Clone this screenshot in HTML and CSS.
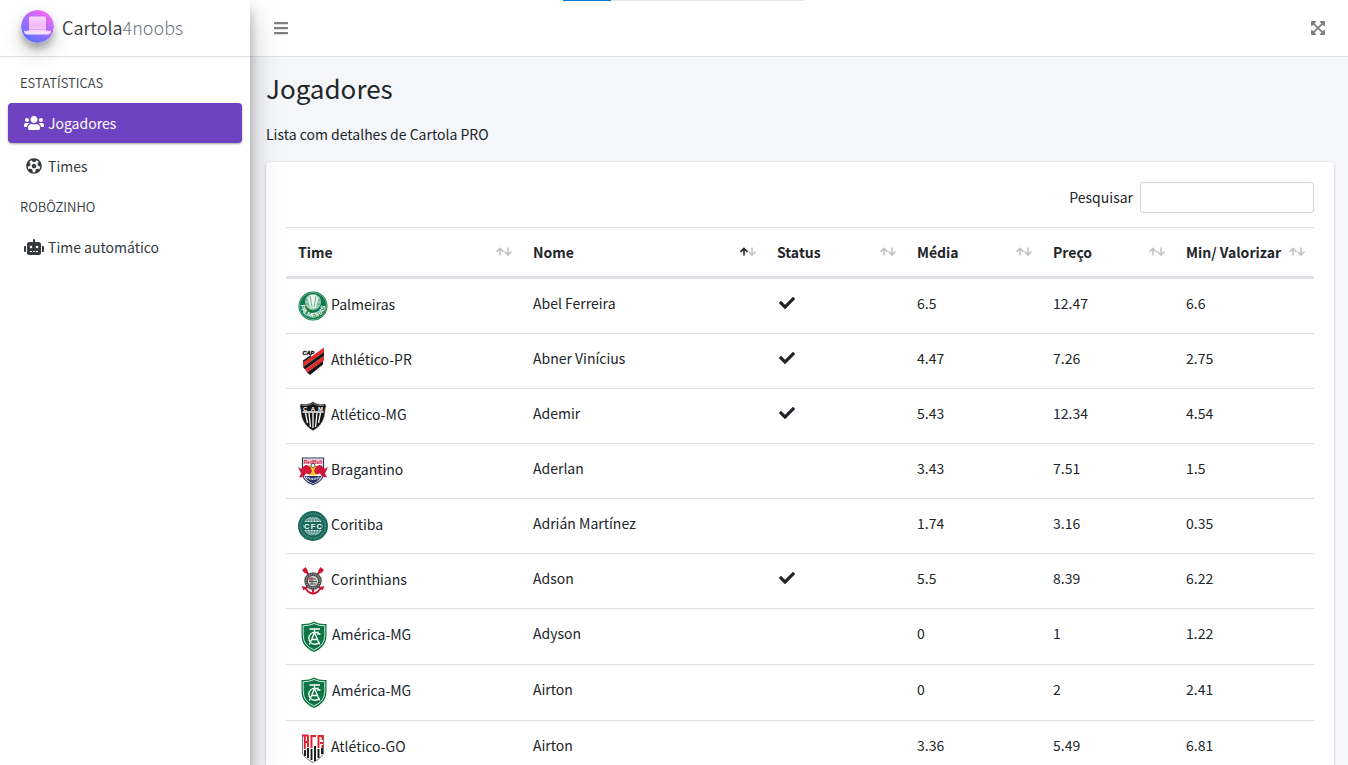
FILE: index.html
```html
<!DOCTYPE html>
<html lang="pt-BR">
<head>
<meta charset="utf-8">
<meta name="viewport" content="width=device-width, initial-scale=1">
<title>Cartola4noobs</title>
<link rel="stylesheet" href="styles.css">
</head>
<body>
<svg class="sprite" aria-hidden="true">
  <defs>
    <linearGradient id="hat-bg" x1="0.2" y1="1" x2="0.8" y2="0"><stop offset="0" stop-color="#5173ff"/><stop offset="0.5" stop-color="#a66bff"/><stop offset="1" stop-color="#ff68f4"/></linearGradient>
    <linearGradient id="hat-fg" x1="0" y1="0" x2="0" y2="1"><stop offset="0" stop-color="#fbd9ff"/><stop offset="0.5" stop-color="#f2b6fb"/><stop offset="1" stop-color="#fbe9ff"/></linearGradient>
    <symbol id="check" viewBox="0 0 512 512"><path d="M173.898 439.404l-166.4-166.4c-9.997-9.997-9.997-26.206 0-36.204l36.203-36.204c9.997-9.998 26.207-9.998 36.204 0L192 312.69 432.095 72.596c9.997-9.997 26.207-9.997 36.204 0l36.203 36.204c9.997 9.997 9.997 26.206 0 36.204l-294.4 294.401c-9.998 9.997-26.207 9.997-36.204-.001z"/></symbol>
    <symbol id="sort" viewBox="0 0 16 10"><g fill="none" stroke="currentColor" stroke-width="1.6"><path class="sort-up" d="M4 8.500V1.500M0.500 5L4 1.500L7.500 5"/><path class="sort-down" d="M12 0.500V8M8.500 4.500L12 8L15.500 4.500"/></g></symbol>
    <symbol id="palmeiras" viewBox="0 0 30 30"><circle cx="15" cy="15" r="14.500" fill="#0d7a47"/><circle cx="15" cy="15" r="13.600" fill="none" stroke="#b9dccb" stroke-width="0.500"/><circle cx="15" cy="11" r="8" fill="#9ccbb4"/><path d="M9.500 7l3 10h5l3-10-3-3h-5z" fill="#e9f4ee"/><path d="M12 5l2 11M18 5l-2 11M8 9h2M20 9h2M8 13h3M19 13h3" stroke="#4c9d76" stroke-width="0.800"/><path id="pal-arc" d="M2.500 14a12.500 12.500 0 0 0 25 0" fill="none"/><text font-size="6.500" font-weight="700" fill="#fff"><textPath href="#pal-arc" startOffset="0">PALMEIRAS</textPath></text></symbol>
    <symbol id="athletico" viewBox="0 0 30 30"><path d="M5 16.500L26 1.500V6L5 21z" fill="#e32b2e"/><path d="M5 21L26 6v4L7 23.500z" fill="#171717"/><path d="M7 23.500L26 10v4.500L9 26.500z" fill="#e32b2e"/><path d="M9 26.500L25 15v3.500L12 29z" fill="#171717"/><path d="M5 14.500L13 9v2l-8 5.500z" fill="#171717"/><text x="4.500" y="8.500" font-size="5.500" font-weight="900" font-style="italic" fill="#111" stroke="#111" stroke-width="0.400">CAP</text></symbol>
    <symbol id="atletico-mg" viewBox="0 0 30 30"><path d="M15 .8c4 3 8 3 12 2.200l1 2-1 4c0 9-4 16-12 20.500C7 25 3 18 3 9L2 5l1-2c4 .8 8 .8 12-2.200z" fill="#151515" stroke="#888" stroke-width="0.500"/><path d="M4.500 11h21M7.500 12l2 10M11 12l1.500 14M19 12l-1.500 14M22.500 12l-2 10M15 12v15" stroke="#fff" stroke-width="1.300"/><path d="M4 4.500q6 1 11-2q5 3 11 2" fill="none" stroke="#aaa" stroke-width="0.600"/><text x="5" y="10" font-size="6" font-weight="700" fill="#fff">C</text><text x="12.800" y="9.500" font-size="6" font-weight="700" fill="#fff">A</text><text x="20" y="10" font-size="6" font-weight="700" fill="#fff">M</text></symbol>
    <symbol id="bragantino" viewBox="0 0 30 30"><path d="M4.500 2h21v15q0 8-10.500 11.500Q4.500 25 4.500 17z" fill="#fff" stroke="#23325f" stroke-width="1.200"/><path d="M6 3h18v4.500H6z" fill="#f3ccd5"/><text x="5.500" y="7.500" font-size="5" font-weight="700" fill="#d01b45">RedBull</text><circle cx="15" cy="14" r="5.500" fill="#ffc928"/><path d="M0 11l4 2c2-5 6-5 8.500-1.500L14 15l-2 3.500-4-1-2 3-5 1 2-4zM30 11l-4 2c-2-5-6-5-8.500-1.500L16 15l2 3.500 4-1 2 3 5 1-2-4z" fill="#d0173c"/><circle cx="15" cy="9.500" r="2" fill="#fff" stroke="#23325f" stroke-width="0.800"/><path d="M6.500 20h17q-2 5-8.500 7.500Q8.500 25 6.500 20z" fill="#23325f"/><path d="M8 21q7 4 14 0" fill="none" stroke="#d8dce8" stroke-width="2" stroke-dasharray="1 0.600"/></symbol>
    <symbol id="coritiba" viewBox="0 0 30 30"><circle cx="15" cy="15" r="15" fill="#156559"/><circle cx="15" cy="15" r="12.300" fill="none" stroke="#4a8b81" stroke-width="2" stroke-dasharray="1 0.800"/><circle cx="15" cy="15" r="9.500" fill="#d8e7e4"/><g fill="none" stroke="#25756a" stroke-width="0.800"><ellipse cx="15" cy="15" rx="3.500" ry="9.500"/><ellipse cx="15" cy="15" rx="7" ry="9.500"/><path d="M15 5v20M6 9h18M6 21h18"/></g><path d="M6 11h18v8H6z" fill="#156559"/><text x="6" y="17.700" font-size="7.500" font-weight="700" fill="#fff">C</text><text x="12.800" y="17.700" font-size="7.500" font-weight="700" fill="#fff">F</text><text x="18.500" y="17.700" font-size="7.500" font-weight="700" fill="#fff">C</text></symbol>
    <symbol id="corinthians" viewBox="0 0 30 30"><g fill="none" stroke="#c91632"><path stroke-width="2" d="M6 3l17 20M24 3L7 23"/><path stroke-width="1.800" d="M5 22q4 1 5 3.500q2.500 2 5 2t5-2q1-2.500 5-3.500"/></g><path d="M4 4l3.500-3 2.500 4-3 2.500zM26 4l-3.500-3-2.500 4 3 2.500zM3.500 20l4 1-2 3.500zM26.500 20l-4 1 2 3.500zM13.500 23h3L15 30z" fill="#c91632"/><circle cx="15" cy="15" r="8.700" fill="#494949"/><circle cx="15" cy="15" r="7" fill="none" stroke="#a5a5a5" stroke-width="1.200" stroke-dasharray="1.200 1"/><circle cx="15" cy="15" r="5.200" fill="#ccc"/><path d="M11 13h7M11 15.500h8M12 18h6M14 11v7" stroke="#555" stroke-width="1"/><path d="M11 11.500h3v3h-3z" fill="#c95462"/></symbol>
    <symbol id="america" viewBox="0 0 31 31"><path d="M16 .5q5.500 3 12.500 2.500V14q0 12-12.500 17Q3.500 26 3.500 14V3Q10.500 3.500 16 .5z" fill="#0c7543"/><path d="M16 2.500q5 2.400 10.800 2.300V14q0 10.500-10.800 15Q5.200 24.500 5.200 14V4.800Q11 4.900 16 2.500z" fill="none" stroke="#e5f2eb" stroke-width="0.900"/><g fill="none" stroke="#fff" stroke-width="1.300"><path d="M11.500 8h10.500M16.500 8v4M11.500 23.500l5-12 5 12M13 18.500h7"/><path d="M21.500 13.500a6 6 0 1 0 0 7.500M20 10.500v2.500h2.500"/></g></symbol>
    <symbol id="atletico-go" viewBox="0 0 30 30"><path d="M4 1q5 .8 11 .2Q21 1.800 26 1v20q-4 6-11 9Q8 27 4 21z" fill="#fff"/><path d="M4.500 2v19q4 5.500 10.500 8.500Q21.500 26.500 25.500 21V2" fill="none" stroke="#555" stroke-width="0.800"/><g stroke-width="1.900" fill="none"><path d="M4 2.500h6.500M6.800 16V3M10 3v11M7 9h3M18 3h-4.500V15M25.500 3h-5V15M24.500 3v4M24.500 12v3M22 10h3" stroke="#e8202c"/><path d="M7 17v6M10 15v10M13.500 16v11M17 13v15M20.500 16v9M24 15v6" stroke="#171717"/></g></symbol>
  </defs>
</svg>
<div class="app">
  <aside class="sidebar">
    <a class="brand" href="#">
      <svg class="brand-logo" viewBox="0 0 33 33" aria-hidden="true"><circle cx="16.500" cy="16.500" r="16.500" fill="url(#hat-bg)"/><path d="M3.500 20.500q2.500 1.200 4.500-.2V8q0-1.500 1.500-1.500h14Q25 6.500 25 8v12.300q2 1.400 4.500.2Q31 22 29 23.500q-1 1-3 1H7q-2 0-3-1Q2 22 3.500 20.500z" fill="url(#hat-fg)"/><path d="M8 19.500h17" stroke="#dfa7f7" stroke-width="1"/></svg>
      <span class="brand-text">Cartola<span class="brand-light">4noobs</span></span>
    </a>
    <nav class="menu">
      <h2 class="menu-header">ESTATÍSTICAS</h2>
      <a class="menu-link active" href="#"><svg class="menu-icon" viewBox="0 0 640 512" aria-hidden="true"><path d="M96 224c35.300 0 64-28.700 64-64s-28.700-64-64-64-64 28.700-64 64 28.700 64 64 64zm448 0c35.300 0 64-28.700 64-64s-28.700-64-64-64-64 28.700-64 64 28.700 64 64 64zm32 32h-64c-17.600 0-33.500 7.100-45.100 18.600 40.300 22.100 68.900 62 75.100 109.400h66c17.700 0 32-14.300 32-32v-32c0-35.300-28.700-64-64-64zm-256 0c61.900 0 112-50.100 112-112S381.900 32 320 32 208 82.100 208 144s50.100 112 112 112zm76.800 32h-8.300c-20.800 10-43.900 16-68.500 16s-47.600-6-68.500-16h-8.300C179.600 288 128 339.600 128 403.200V432c0 26.500 21.500 48 48 48h288c26.500 0 48-21.500 48-48v-28.800c0-63.600-51.600-115.200-115.200-115.200zm-223.700-13.400C161.500 263.100 145.600 256 128 256H64c-35.300 0-64 28.700-64 64v32c0 17.700 14.300 32 32 32h65.900c6.300-47.400 34.900-87.300 75.200-109.400z"/></svg>Jogadores</a>
      <a class="menu-link" href="#"><svg class="menu-icon" viewBox="0 0 512 512" aria-hidden="true"><path d="M504 256c0 136.967-111.033 248-248 248S8 392.967 8 256 119.033 8 256 8s248 111.033 248 248zm-48 0l-.003-.282-26.064 22.741-62.679-58.500 16.454-84.355 34.303 3.072c-24.889-34.216-60.004-60.089-100.709-73.141l13.651 31.939L256 139l-74.953-41.525 13.651-31.939c-40.631 13.028-75.780 38.870-100.709 73.141l34.565-3.073 16.192 84.355-62.678 58.500-26.064-22.741-.003.282c0 43.015 13.497 83.952 38.472 117.991l7.704-33.897 85.138 10.447 36.301 77.826-29.902 17.786c40.202 13.122 84.290 13.148 124.572 0l-29.902-17.786 36.301-77.826 85.138-10.447 7.704 33.897C442.503 339.952 456 299.015 456 256zm-248.102 69.571l-29.894-91.312L256 177.732l77.996 56.527-29.622 91.312h-96.476z"/></svg>Times</a>
      <h2 class="menu-header">ROBÔZINHO</h2>
      <a class="menu-link" href="#"><svg class="menu-icon" viewBox="0 0 640 512" aria-hidden="true"><path d="M32 224H64V416H32A32 32 0 0 1 0 384V256A32 32 0 0 1 32 224Zm512-48V448a64 64 0 0 1-64 64H160a64 64 0 0 1-64-64V176a80 80 0 0 1 80-80H288V32a32 32 0 0 1 64 0V96H464A80 80 0 0 1 544 176ZM264 256a40 40 0 1 0-40 40A40 40 0 0 0 264 256Zm-8 128H192v32h64Zm96 0H288v32h64ZM456 256a40 40 0 1 0-40 40A40 40 0 0 0 456 256Zm-8 128H384v32h64ZM640 256V384a32 32 0 0 1-32 32H576V224h32A32 32 0 0 1 640 256Z"/></svg>Time automático</a>
    </nav>
  </aside>
  <div class="page">
    <header class="topbar">
      <button class="icon-button" type="button" aria-label="Menu"><svg viewBox="0 0 448 512"><path d="M16 132h416c8.800 0 16-7.200 16-16V76c0-8.800-7.200-16-16-16H16C7.200 60 0 67.200 0 76v40c0 8.800 7.200 16 16 16zm0 160h416c8.800 0 16-7.200 16-16v-40c0-8.800-7.200-16-16-16H16c-8.800 0-16 7.200-16 16v40c0 8.800 7.200 16 16 16zm0 160h416c8.800 0 16-7.200 16-16v-40c0-8.800-7.200-16-16-16H16c-8.800 0-16 7.200-16 16v40c0 8.800 7.200 16 16 16z"/></svg></button>
      <button class="icon-button" type="button" aria-label="Tela cheia"><svg viewBox="0 0 448 512"><path d="M448 344v112a23.940 23.940 0 0 1-24 24H312c-21.390 0-32.090-25.900-17-41l36.200-36.200L224 295.600 116.770 402.900 153 439c15.090 15.100 4.390 41-17 41H24a23.940 23.940 0 0 1-24-24V344c0-21.400 25.890-32.100 41-17l36.190 36.200L184.460 256 77.180 148.700 41 185c-15.100 15.100-41 4.400-41-17V56a23.940 23.940 0 0 1 24-24h112c21.390 0 32.090 25.900 17 41l-36.200 36.200L224 216.400l107.230-107.300L295 73c-15.090-15.100-4.390-41 17-41h112a23.940 23.940 0 0 1 24 24v112c0 21.400-25.890 32.100-41 17l-36.190-36.200L263.540 256l107.280 107.300L407 327.100c15.100-15.200 41-4.500 41 16.900z"/></svg></button>
    </header>
    <main class="content">
      <h1 class="title">Jogadores</h1>
      <p class="lead">Lista com detalhes de Cartola PRO</p>
      <section class="card">
        <div class="search"><label class="search-label" for="q">Pesquisar</label><input id="q" class="search-input" type="search"></div>
        <table class="players">
          <colgroup><col class="col-team"><col class="col-name"><col class="col-status"><col class="col-avg"><col class="col-price"><col class="col-min"></colgroup>
          <thead><tr>
            <th><button class="sort" type="button">Time<svg class="sort-icon"><use href="#sort"/></svg></button></th>
            <th aria-sort="ascending"><button class="sort ascending" type="button">Nome<svg class="sort-icon"><use href="#sort"/></svg></button></th>
            <th><button class="sort" type="button">Status<svg class="sort-icon"><use href="#sort"/></svg></button></th>
            <th><button class="sort" type="button">Média<svg class="sort-icon"><use href="#sort"/></svg></button></th>
            <th><button class="sort" type="button">Preço<svg class="sort-icon"><use href="#sort"/></svg></button></th>
            <th><button class="sort" type="button">Min/ Valorizar<svg class="sort-icon"><use href="#sort"/></svg></button></th>
          </tr></thead>
          <tbody>
            <tr><td><span class="team"><svg class="crest"><use href="#palmeiras"/></svg>Palmeiras</span></td><td>Abel Ferreira</td><td><svg class="check" role="img" aria-label="Provável"><use href="#check"/></svg></td><td>6.5</td><td>12.47</td><td>6.6</td></tr>
            <tr><td><span class="team"><svg class="crest"><use href="#athletico"/></svg>Athlético-PR</span></td><td>Abner Vinícius</td><td><svg class="check" role="img" aria-label="Provável"><use href="#check"/></svg></td><td>4.47</td><td>7.26</td><td>2.75</td></tr>
            <tr><td><span class="team"><svg class="crest"><use href="#atletico-mg"/></svg>Atlético-MG</span></td><td>Ademir</td><td><svg class="check" role="img" aria-label="Provável"><use href="#check"/></svg></td><td>5.43</td><td>12.34</td><td>4.54</td></tr>
            <tr><td><span class="team"><svg class="crest"><use href="#bragantino"/></svg>Bragantino</span></td><td>Aderlan</td><td></td><td>3.43</td><td>7.51</td><td>1.5</td></tr>
            <tr><td><span class="team"><svg class="crest"><use href="#coritiba"/></svg>Coritiba</span></td><td>Adrián Martínez</td><td></td><td>1.74</td><td>3.16</td><td>0.35</td></tr>
            <tr><td><span class="team"><svg class="crest"><use href="#corinthians"/></svg>Corinthians</span></td><td>Adson</td><td><svg class="check" role="img" aria-label="Provável"><use href="#check"/></svg></td><td>5.5</td><td>8.39</td><td>6.22</td></tr>
            <tr><td><span class="team"><svg class="crest large"><use href="#america"/></svg>América-MG</span></td><td>Adyson</td><td></td><td>0</td><td>1</td><td>1.22</td></tr>
            <tr><td><span class="team"><svg class="crest large"><use href="#america"/></svg>América-MG</span></td><td>Airton</td><td></td><td>0</td><td>2</td><td>2.41</td></tr>
            <tr><td><span class="team"><svg class="crest"><use href="#atletico-go"/></svg>Atlético-GO</span></td><td>Airton</td><td></td><td>3.36</td><td>5.49</td><td>6.81</td></tr>
          </tbody>
        </table>
      </section>
    </main>
  </div>
  <div class="loader"><div class="loader-fill"></div></div>
</div>
</body>
</html>
```
FILE: styles.css
```css
*, *::before, *::after { box-sizing: border-box; }

body {
  margin: 0;
  color: #212529;
  background: #f4f6f9;
  font-family: "Source Sans Pro", "Noto Sans CJK SC", "Noto Sans", sans-serif;
  font-size: 14px;
  line-height: 24px;
}

a { color: inherit; text-decoration: none; }
h1, h2, p { margin: 0; font-weight: 400; }
button, input { font: inherit; color: inherit; }
.sprite { position: absolute; width: 0; height: 0; }

.app { display: flex; height: 100vh; overflow: hidden; }

.sidebar {
  flex: 0 0 250px;
  z-index: 2;
  background: #fff;
  box-shadow: 0 14px 28px rgba(0, 0, 0, .25), 0 10px 10px rgba(0, 0, 0, .22);
}

.brand {
  display: flex;
  align-items: center;
  gap: 8px;
  height: 57px;
  padding: 0 21px 3px;
  border-bottom: 1px solid #dee2e6;
  font-size: 18px;
}
.brand-logo {
  width: 33px;
  height: 33px;
  border-radius: 50%;
  box-shadow: 0 10px 20px rgba(0, 0, 0, .19), 0 6px 6px rgba(0, 0, 0, .23);
}
.brand-text { color: #343a40; font-weight: 350; }
.brand-light { color: #6c757d; font-weight: 300; }

.menu { padding: 8px; color: #343a40; }
.menu-header {
  padding: 6px 12px 8px;
  font-size: 13px;
  font-weight: 350;
  line-height: 24px;
}
.menu-link {
  display: flex;
  align-items: center;
  gap: 4px;
  height: 40px;
  margin-bottom: 3px;
  padding: 0 16px;
  border-radius: 4px;
}
.menu-link.active {
  color: #fff;
  background: #6f42c1;
  box-shadow: 0 1px 3px rgba(0, 0, 0, .12), 0 1px 2px rgba(0, 0, 0, .24);
}
.menu-icon { width: 20px; height: 16px; fill: currentColor; }

.page { flex: 1; min-width: 0; display: flex; flex-direction: column; }
.topbar {
  display: flex;
  flex: 0 0 57px;
  align-items: center;
  justify-content: space-between;
  padding: 0 7px 0 8px;
  background: #fff;
  border-bottom: 1px solid #dee2e6;
}
.icon-button { display: flex; padding: 8px 15px; border: 0; background: none; color: #7f7f7f; }
.icon-button svg { width: 16px; height: 16px; fill: currentColor; }

.content { flex: 1; min-height: 0; padding: 13px 14px 15px 16px; overflow: auto; scrollbar-width: none; }
.title { font-size: 26px; line-height: 36px; }
.lead { margin: 16px 0; }

.card {
  padding: 20px;
  background: #fff;
  border-radius: 4px;
  box-shadow: 0 0 1px rgba(0, 0, 0, .13), 0 1px 3px rgba(0, 0, 0, .2);
}
.search { display: flex; align-items: center; justify-content: flex-end; gap: 7px; margin-bottom: 14px; }
.search-label { padding-bottom: 2px; }
.search-input { width: 174px; height: 31px; padding: 4px 8px; border: 1px solid #ced4da; border-radius: 3px; background: #fff; }

.players { width: 100%; table-layout: fixed; border-collapse: separate; border-spacing: 0; }
.col-team { width: 235px; }
.col-name { width: 244px; }
.col-status { width: 140px; }
.col-avg { width: 136px; }
.col-price { width: 133px; }
.col-min { width: 140px; }

.players th { padding: 0; border-top: 1px solid #dee2e6; border-bottom: 3px solid #dee2e6; }
.players td { padding: 12px; vertical-align: top; border-bottom: 1px solid #dee2e6; }
.sort {
  display: flex;
  align-items: center;
  justify-content: space-between;
  width: 100%;
  height: 48px;
  padding: 0 9px 0 12px;
  border: 0;
  background: none;
  font-weight: 700;
  white-space: nowrap;
}
.sort-icon { width: 16px; height: 10px; --up: #c3c4c5; --down: #c3c4c5; }
.sort-up { stroke: var(--up); }
.sort-down { stroke: var(--down); }
.ascending .sort-icon { --up: #212529; }

.team { display: flex; align-items: flex-start; gap: 3px; line-height: 27px; }
.crest { width: 30px; height: 30px; flex: none; font-family: "Liberation Sans", sans-serif; }
.crest.large { width: 31px; height: 31px; }
.check { display: block; width: 16px; height: 16px; margin: 4px 2px; fill: #212529; }

.loader { position: absolute; z-index: 3; top: 0; left: 563px; width: 241px; height: 1px; background: #e6e6e6; }
.loader-fill { width: 20%; height: 100%; background: #0275d8; }
```
